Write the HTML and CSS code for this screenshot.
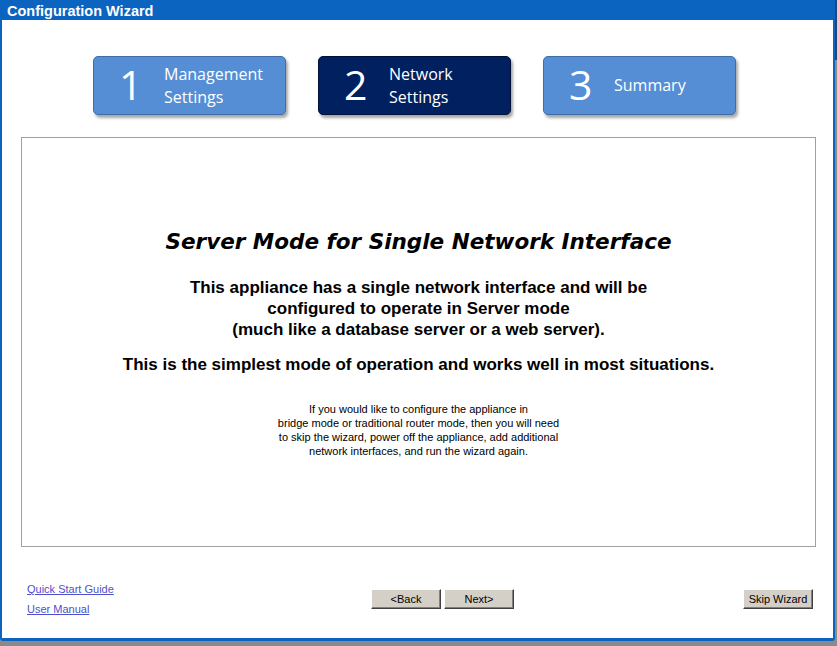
FILE: index.html
```html
<!DOCTYPE html>
<html>
<head>
<meta charset="utf-8">
<link rel="stylesheet" href="styles.css">
</head>
<body>
<div class="window">
  <div class="titlebar">Configuration Wizard</div>
  <div class="client">
    <div class="steps">
      <div class="step"><span class="num">1</span><span class="label">Management<br>Settings</span></div>
      <div class="step active"><span class="num">2</span><span class="label">Network<br>Settings</span></div>
      <div class="step"><span class="num">3</span><span class="label">Summary</span></div>
    </div>
    <div class="panel">
      <h1 class="heading">Server Mode for Single Network Interface</h1>
      <p class="lead">This appliance has a single network interface and will be<br>configured to operate in Server mode<br>(much like a database server or a web server).</p>
      <p class="lead second">This is the simplest mode of operation and works well in most situations.</p>
      <p class="note">If you would like to configure the appliance in<br>bridge mode or traditional router mode, then you will need<br>to skip the wizard, power off the appliance, add additional<br>network interfaces, and run the wizard again.</p>
    </div>
    <div class="footer">
      <div class="links">
        <a href="#" class="link">Quick Start Guide</a>
        <a href="#" class="link">User Manual</a>
      </div>
      <div class="nav">
        <button class="btn">&lt;Back</button>
        <button class="btn">Next&gt;</button>
      </div>
      <div class="skip">
        <button class="btn">Skip Wizard</button>
      </div>
    </div>
  </div>
</div>
</body>
</html>
```
FILE: styles.css
```css
html, body {
  margin: 0;
  padding: 0;
}
body {
  width: 837px;
  height: 646px;
  background: linear-gradient(to bottom, #1b4a7a 0, #1b4a7a 60px, #8a8a8a 60px, #8a8a8a 100%);
  font-family: "Liberation Sans", Arial, sans-serif;
  overflow: hidden;
}
.window {
  width: 835px;
  height: 641px;
  box-sizing: border-box;
  background: #ffffff;
  border: 2px solid #0b64bf;
  border-top: 0;
  border-bottom-width: 3px;
  border-radius: 0 0 3px 3px;
  display: flex;
  flex-direction: column;
}
.titlebar {
  height: 20px;
  background: #0b64bf;
  color: #ffffff;
  font-weight: bold;
  font-size: 14.5px;
  line-height: 23px;
  margin: 0 -2px;
  padding-left: 7px;
}
.client {
  flex: 1;
  display: flex;
  flex-direction: column;
}
.steps {
  display: flex;
  gap: 32px;
  padding: 36px 0 0 91px;
  height: 59px;
}
.step {
  width: 193px;
  height: 59px;
  box-sizing: border-box;
  background: #558ed5;
  border: 1px solid #3d6ea8;
  border-radius: 5px;
  box-shadow: 2px 3px 3px rgba(0,0,0,0.35);
  color: #ffffff;
  display: flex;
  align-items: center;
  padding-left: 25px;
  font-family: "Open Sans", sans-serif;
}
.step.active {
  background: #002060;
  border-color: #00123a;
}
.num {
  font-size: 41px;
  line-height: 1;
  width: 45px;
  flex: none;
  margin-top: -2px;
}
.label {
  font-size: 16px;
  line-height: 23px;
}
.panel {
  margin: 22px 17px 0 19px;
  height: 410px;
  box-sizing: border-box;
  border: 1px solid #a0a0a0;
  text-align: center;
  padding-top: 90px;
  color: #000000;
}
.heading {
  margin: 0;
  font-family: "DejaVu Sans", sans-serif;
  font-size: 21.5px;
  line-height: 28px;
  font-weight: bold;
  font-style: italic;
}
.lead {
  margin: 21px 0 0;
  font-size: 17px;
  line-height: 21px;
  font-weight: bold;
}
.lead.second {
  margin-top: 14px;
}
.note {
  margin: 27px 0 0;
  font-size: 11px;
  line-height: 14px;
}
.footer {
  display: flex;
  align-items: flex-start;
  padding: 35px 20px 0 25px;
}
.links {
  display: flex;
  flex-direction: column;
  gap: 6px;
  width: 344px;
}
.link {
  color: #4f4fcc;
  font-size: 11px;
  line-height: 14px;
}
.nav {
  display: flex;
  gap: 3px;
  padding-top: 7px;
}
.skip {
  margin-left: auto;
  padding-top: 7px;
}
.btn {
  height: 20px;
  width: 70px;
  background: #d4d0c8;
  border: 1px solid;
  border-color: #ffffff #404040 #404040 #ffffff;
  box-shadow: inset -1px -1px 0 #808080;
  font-family: "Liberation Sans", Arial, sans-serif;
  font-size: 11px;
  color: #000000;
  padding: 0;
}
```
